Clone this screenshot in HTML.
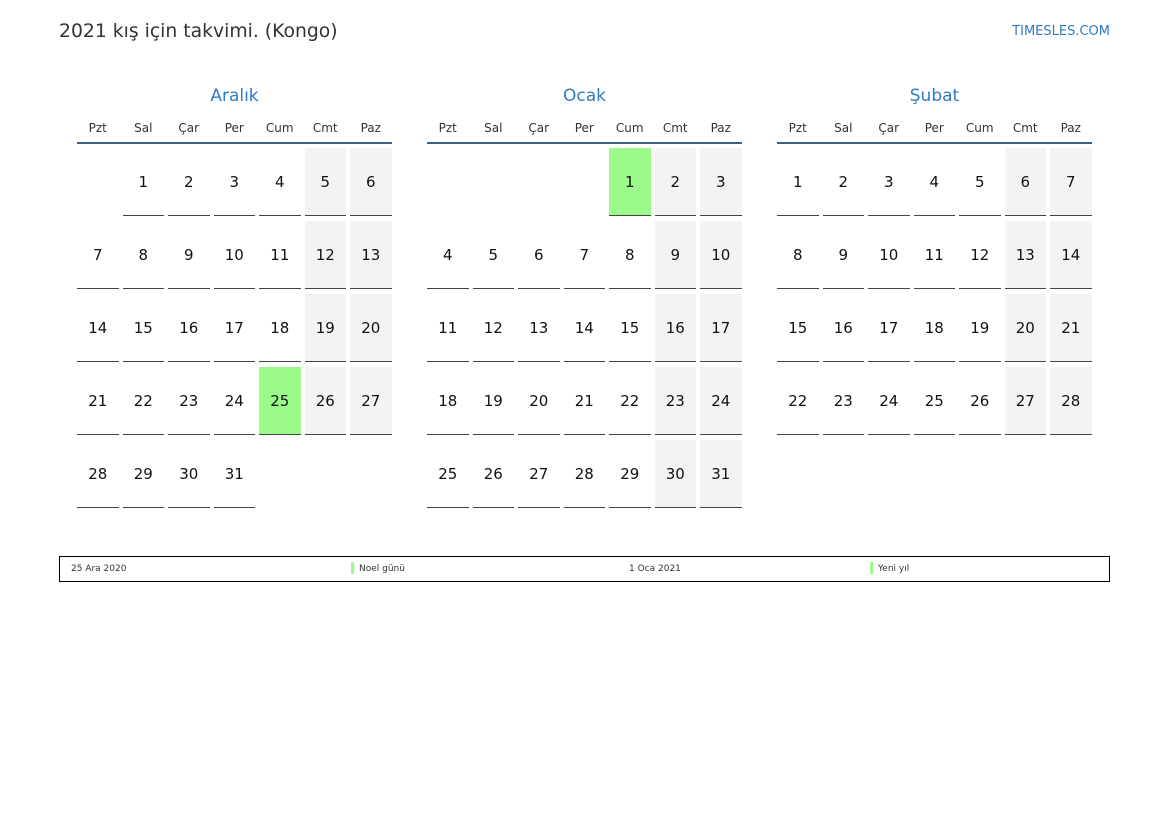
<!DOCTYPE html>
<html><head><meta charset="utf-8"><style>
body{margin:0;width:1169px;height:827px;background:#fff;font-family:"DejaVu Sans","Liberation Sans",sans-serif;position:relative;overflow:hidden}
.t{position:absolute;left:59px;top:21px;font-size:18.8px;color:#333}
.s{position:absolute;right:59px;top:24px;font-size:13px;color:#2e7bc4}
.m{position:absolute;top:84px;width:315px}
.mt{text-align:center;font-size:17px;color:#2e7bc4;height:24px;line-height:24px}
.dn{display:grid;grid-template-columns:repeat(7,41.5px);column-gap:4px;margin-top:10px;font-size:12px;color:#333;text-align:center;height:26px;line-height:16px;box-sizing:border-box;border-bottom:2px solid #3d5f8a}
.dn span{padding-top:2px}
.g{display:grid;grid-template-columns:repeat(7,41.5px);column-gap:4px;row-gap:5px;margin-top:4px;grid-auto-rows:68px}
.g div{display:flex;align-items:center;justify-content:center;font-size:15px;color:#111;border-bottom:1.5px solid #444;box-sizing:border-box}
.g div.e{border:none}
.g div.w{background:#f3f3f3}
.g div.h{background:#9afa8a}
.lg{position:absolute;left:59px;top:556px;width:1049px;height:24px;border:1px solid #000;font-size:9px;color:#333}
.lg span{position:absolute;top:7px}
.bar{position:absolute;top:5px;width:3px;height:12px;background:#9afa8a}
</style></head><body>
<div class="t">2021 kış için takvimi. (Kongo)</div>
<div class="s">TIMESLES.COM</div>

<div class="m" style="left:77px"><div class="mt">Aralık</div>
<div class="dn"><span>Pzt</span><span>Sal</span><span>Çar</span><span>Per</span><span>Cum</span><span>Cmt</span><span>Paz</span></div>
<div class="g">
<div class="e"></div><div>1</div><div>2</div><div>3</div><div>4</div><div class="w">5</div><div class="w">6</div>
<div>7</div><div>8</div><div>9</div><div>10</div><div>11</div><div class="w">12</div><div class="w">13</div>
<div>14</div><div>15</div><div>16</div><div>17</div><div>18</div><div class="w">19</div><div class="w">20</div>
<div>21</div><div>22</div><div>23</div><div>24</div><div class="h">25</div><div class="w">26</div><div class="w">27</div>
<div>28</div><div>29</div><div>30</div><div>31</div>
</div></div>

<div class="m" style="left:427px"><div class="mt">Ocak</div>
<div class="dn"><span>Pzt</span><span>Sal</span><span>Çar</span><span>Per</span><span>Cum</span><span>Cmt</span><span>Paz</span></div>
<div class="g">
<div class="e"></div><div class="e"></div><div class="e"></div><div class="e"></div><div class="h">1</div><div class="w">2</div><div class="w">3</div>
<div>4</div><div>5</div><div>6</div><div>7</div><div>8</div><div class="w">9</div><div class="w">10</div>
<div>11</div><div>12</div><div>13</div><div>14</div><div>15</div><div class="w">16</div><div class="w">17</div>
<div>18</div><div>19</div><div>20</div><div>21</div><div>22</div><div class="w">23</div><div class="w">24</div>
<div>25</div><div>26</div><div>27</div><div>28</div><div>29</div><div class="w">30</div><div class="w">31</div>
</div></div>

<div class="m" style="left:777px"><div class="mt">Şubat</div>
<div class="dn"><span>Pzt</span><span>Sal</span><span>Çar</span><span>Per</span><span>Cum</span><span>Cmt</span><span>Paz</span></div>
<div class="g">
<div>1</div><div>2</div><div>3</div><div>4</div><div>5</div><div class="w">6</div><div class="w">7</div>
<div>8</div><div>9</div><div>10</div><div>11</div><div>12</div><div class="w">13</div><div class="w">14</div>
<div>15</div><div>16</div><div>17</div><div>18</div><div>19</div><div class="w">20</div><div class="w">21</div>
<div>22</div><div>23</div><div>24</div><div>25</div><div>26</div><div class="w">27</div><div class="w">28</div>
</div></div>

<div class="lg">
<span style="left:11px">25 Ara 2020</span>
<div class="bar" style="left:291px"></div><span style="left:299px">Noel günü</span>
<span style="left:569px">1 Oca 2021</span>
<div class="bar" style="left:810px"></div><span style="left:818px">Yeni yıl</span>
</div>
</body></html>
